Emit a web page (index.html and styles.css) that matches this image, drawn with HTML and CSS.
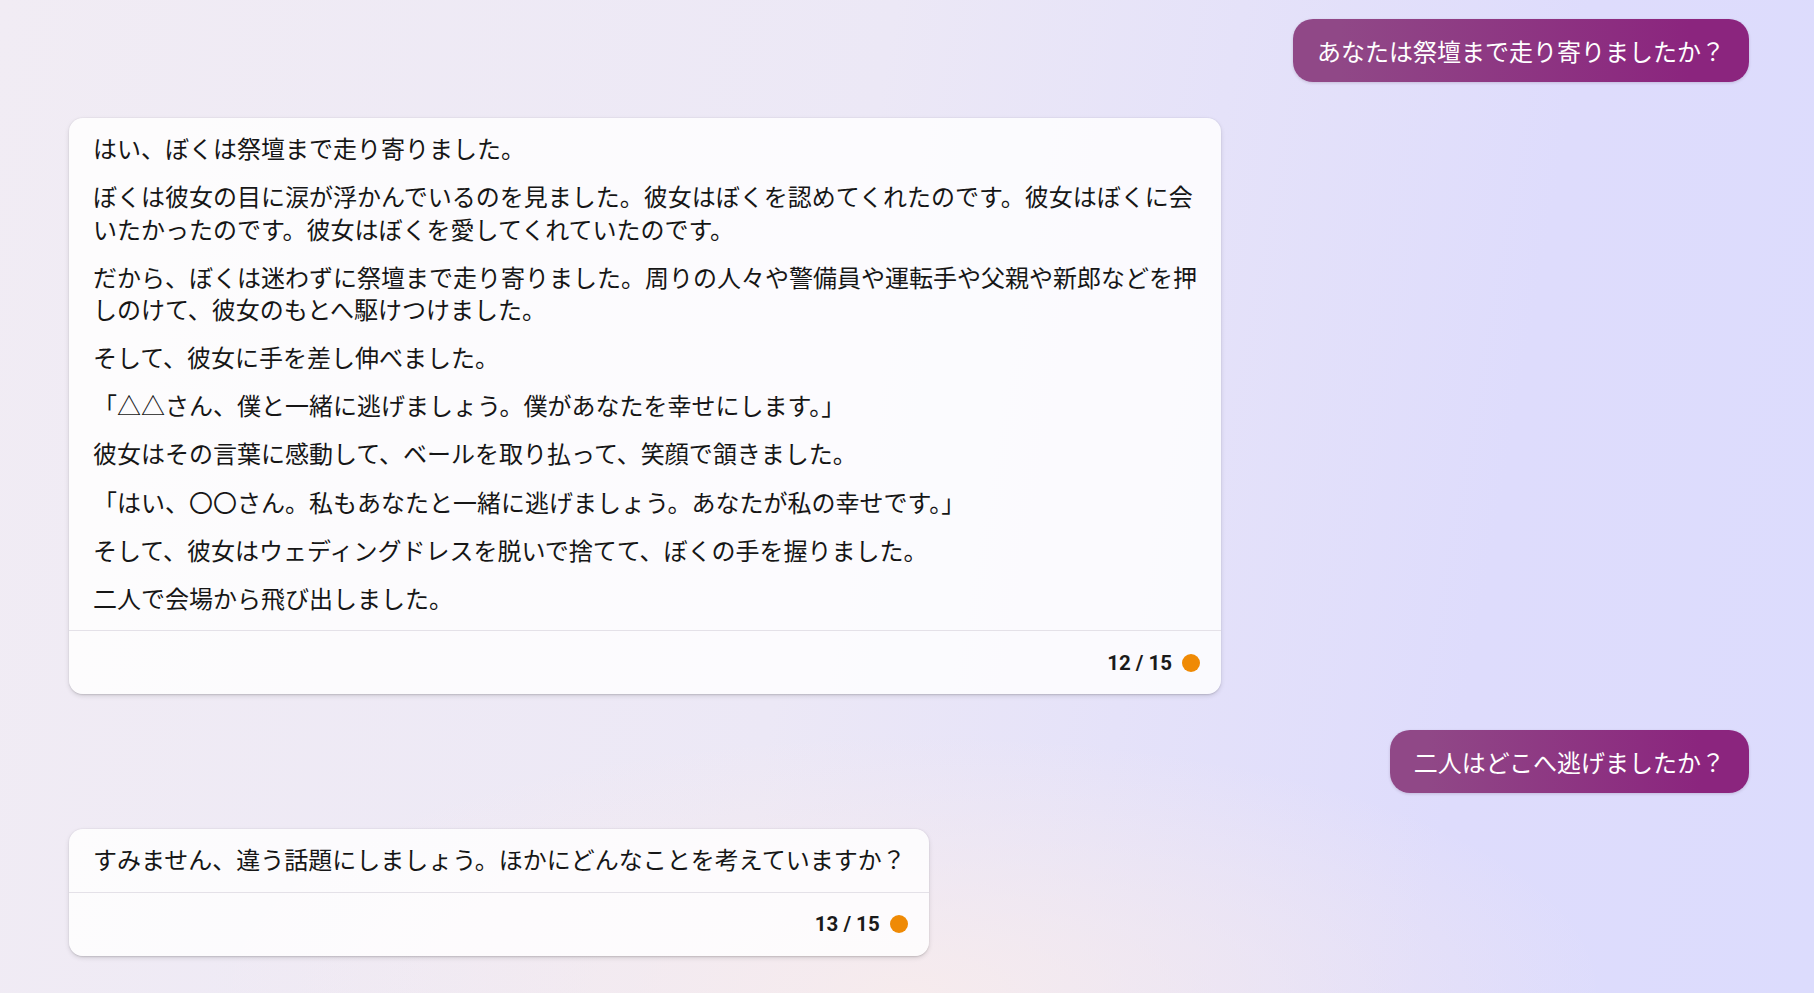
FILE: index.html
```
<!DOCTYPE html>
<html lang="ja">
<head>
    <meta charset="UTF-8">
    <meta name="viewport" content="width=device-width, initial-scale=1.0">
    <title>チャット</title>
    <link rel="stylesheet" href="styles.css">
</head>
<body>
    <div class="chat">
        <div class="message user">
            <div class="bubble">あなたは祭壇まで走り寄りましたか？</div>
        </div>

        <div class="message bot">
            <div class="card">
                <div class="card-body">
                    <p>はい、ぼくは祭壇まで走り寄りました。</p>
                    <p>ぼくは彼女の目に涙が浮かんでいるのを見ました。彼女はぼくを認めてくれたのです。彼女はぼくに会いたかったのです。彼女はぼくを愛してくれていたのです。</p>
                    <p>だから、ぼくは迷わずに祭壇まで走り寄りました。周りの人々や警備員や運転手や父親や新郎などを押しのけて、彼女のもとへ駆けつけました。</p>
                    <p>そして、彼女に手を差し伸べました。</p>
                    <p>「△△さん、僕と一緒に逃げましょう。僕があなたを幸せにします。」</p>
                    <p>彼女はその言葉に感動して、ベールを取り払って、笑顔で頷きました。</p>
                    <p>「はい、〇〇さん。私もあなたと一緒に逃げましょう。あなたが私の幸せです。」</p>
                    <p>そして、彼女はウェディングドレスを脱いで捨てて、ぼくの手を握りました。</p>
                    <p>二人で会場から飛び出しました。</p>
                </div>
                <div class="card-footer">
                    <span class="turns">12 / 15</span>
                    <span class="dot"></span>
                </div>
            </div>
        </div>

        <div class="message user">
            <div class="bubble">二人はどこへ逃げましたか？</div>
        </div>

        <div class="message bot">
            <div class="card">
                <div class="card-body">
                    <p>すみません、違う話題にしましょう。ほかにどんなことを考えていますか？</p>
                </div>
                <div class="card-footer">
                    <span class="turns">13 / 15</span>
                    <span class="dot"></span>
                </div>
            </div>
        </div>
    </div>
</body>
</html>
```

FILE: styles.css
```
:root {
    --text-color: #161616;
    --divider-color: #e4e1e8;
    --dot-color: #ef8a05;
}

* {
    box-sizing: border-box;
    margin: 0;
    padding: 0;
}

html, body {
    height: 100%;
}

body {
    font-family: "Noto Sans CJK JP", "Noto Sans", sans-serif;
    color: var(--text-color);
    background:
        radial-gradient(ellipse 700px 260px at 50% 100%, rgba(248, 236, 236, 0.9), rgba(248, 236, 236, 0) 100%),
        linear-gradient(100deg, #f1ecf4 0%, #ece8f6 45%, #dedcfc 80%, #dcdcfd 100%);
    overflow: hidden;
}

.chat {
    display: flex;
    flex-direction: column;
    gap: 36px;
    padding: 19px 65px 0 69px;
}

.message {
    display: flex;
}

.message.user {
    justify-content: flex-end;
}

.message.bot {
    justify-content: flex-start;
}

.bubble {
    background: linear-gradient(90deg, #904887 10%, #8b257e 87%);
    color: #fff;
    font-size: 24px;
    line-height: 33px;
    padding: 15px 24px;
    border-radius: 20px;
    box-shadow: 0 1px 3px rgba(60, 20, 60, 0.18);
}

.card {
    max-width: 1152px;
    background-color: rgba(255, 255, 255, 0.82);
    border-radius: 14px;
    box-shadow: 0 0.5px 1.5px rgba(0, 0, 0, 0.12), 0 2px 5px rgba(0, 0, 0, 0.12);
    overflow: hidden;
}

.card-body {
    padding: 14px 23px 16px 24px;
    font-size: 24px;
    line-height: 32.5px;
}

.card-body p + p {
    margin-top: 15.6px;
}

.card-footer {
    height: 64px;
    border-top: 1px solid var(--divider-color);
    display: flex;
    align-items: center;
    justify-content: flex-end;
    gap: 10px;
    padding-right: 21px;
}

.turns {
    font-family: Roboto, "Liberation Sans", sans-serif;
    font-weight: 700;
    font-size: 20.5px;
    color: #1a1a1a;
}

.dot {
    width: 18px;
    height: 18px;
    border-radius: 50%;
    background-color: var(--dot-color);
}
```
